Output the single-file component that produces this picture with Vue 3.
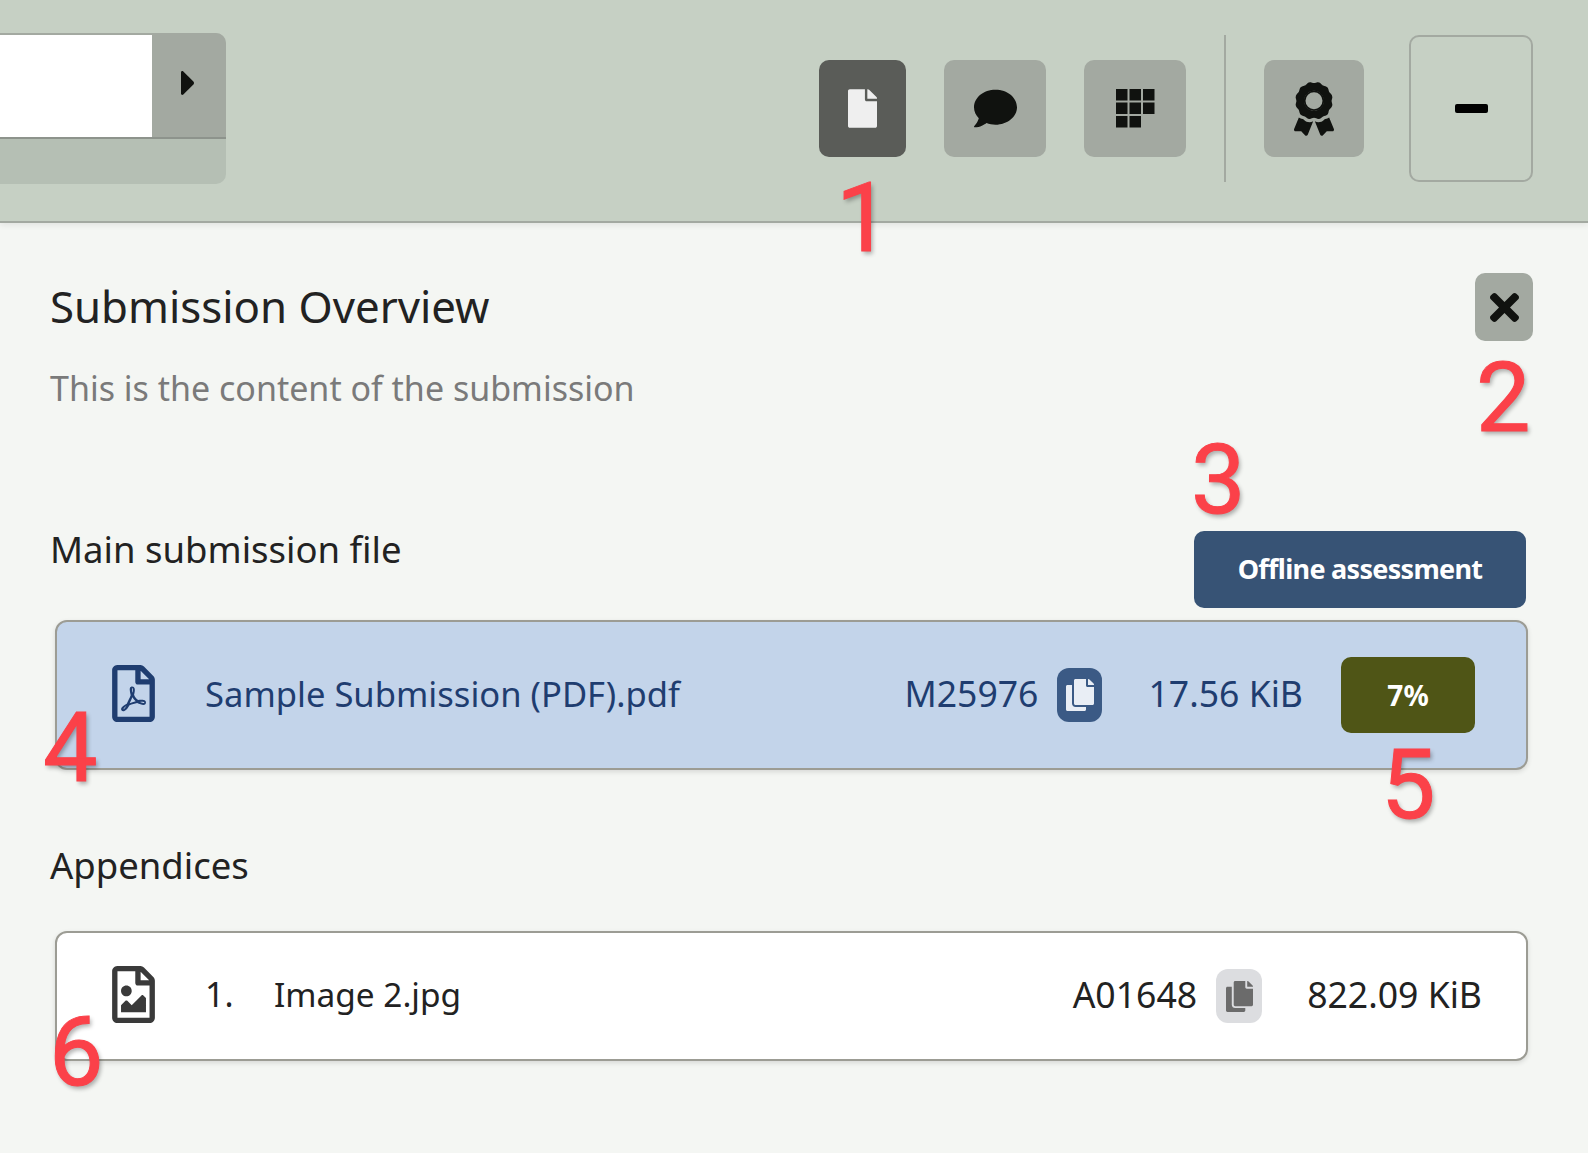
<template>
  <div class="page">
    <header class="topbar">
      <div class="search">
        <div class="search__row">
          <div class="search__input"></div>
          <button class="search__go" aria-label="Next">
            <svg width="13" height="24" viewBox="0 0 13 24"><path d="M0 1.5C0 .2 1.300-.4 2.300.5L12.400 10.500c.8.800.8 2.200 0 3L2.300 23.500C1.300 24.400 0 23.800 0 22.500z" fill="#10120f" /></svg>
          </button>
        </div>
      </div>
      <nav class="tools">
        <button class="tool tool--active tool--doc" aria-label="Submission">
          <svg width="29" height="39" viewBox="0 0 384 512"><path :d="icons.file" fill="#efefef" /></svg>
        </button>
        <button class="tool" aria-label="Comments">
          <svg width="43" height="43" viewBox="0 0 512 512"><path :d="icons.comment" fill="#10120f" /></svg>
        </button>
        <button class="tool" aria-label="Overview">
          <svg class="tool__grid" width="39" height="39" viewBox="0 0 39 39" fill="#10120f">
            <rect v-for="c in gridCells" :key="c.x + '-' + c.y" :x="c.x" :y="c.y" width="11.500" height="11.500" />
          </svg>
        </button>
        <span class="tools__divider"></span>
        <button class="tool tool--award" aria-label="Grade">
          <svg width="40" height="54" viewBox="0 0 384 512">
            <path :d="icons.award" fill="#10120f" />
            <circle cx="192" cy="176" r="90" fill="none" stroke="#10120f" stroke-width="17" />
          </svg>
        </button>
        <button class="tool-box" aria-label="Collapse"><span class="tool-box__bar"></span></button>
      </nav>
    </header>

    <main class="content">
      <div class="title-row">
        <h1 class="title">Submission Overview</h1>
        <button class="close" aria-label="Close">
          <svg width="29" height="29" viewBox="0 80 352 352"><path :d="icons.times" fill="#10120f" /></svg>
        </button>
      </div>
      <p class="subtitle">This is the content of the submission</p>

      <div class="main-head">
        <h2 class="heading">Main submission file</h2>
        <button class="offline">Offline assessment</button>
      </div>
      <div class="file file--main">
        <svg class="file__icon" width="43" height="57" viewBox="0 0 384 512"><path :d="icons.filePdf" fill="#1f3d70" /></svg>
        <span class="file__name">Sample Submission (PDF).pdf</span>
        <span class="file__id">M25976</span>
        <button class="copy copy--blue" aria-label="Copy">
          <svg width="28" height="32" viewBox="0 0 448 512"><path :d="icons.copy" fill="#e9eef5" /></svg>
        </button>
        <span class="file__size">17.56 KiB</span>
        <span class="badge">7%</span>
      </div>

      <h2 class="heading heading--appendix">Appendices</h2>
      <div class="file file--appendix">
        <svg class="file__icon" width="43" height="57" viewBox="0 0 384 512"><path :d="icons.fileImage" fill="#3a3a3a" /></svg>
        <span class="file__num">1.</span>
        <span class="file__name">Image 2.jpg</span>
        <span class="file__id">A01648</span>
        <button class="copy copy--grey" aria-label="Copy">
          <svg width="27" height="31" viewBox="0 0 448 512"><path :d="icons.copy" fill="#6b6b6b" /></svg>
        </button>
        <span class="file__size">822.09 KiB</span>
      </div>
    </main>

    <span v-for="n in 6" :key="n" class="mark" :class="`mark--${n}`">{{ n }}</span>
  </div>
</template>

<script setup>
const icons = {
  file: 'M224 136V0H24C10.7 0 0 10.7 0 24v464c0 13.3 10.7 24 24 24h336c13.3 0 24-10.7 24-24V160H248c-13.2 0-24-10.8-24-24zm160-14.1v6.1H256V0h6.1c6.4 0 12.5 2.5 17 7l97.9 98c4.5 4.5 7 10.6 7 16.9z',
  comment: 'M256 32C114.6 32 0 125.1 0 240c0 49.6 21.4 95 57 130.7C44.5 421.1 2.7 466 2.2 466.5c-2.2 2.3-2.8 5.7-1.5 8.7S4.8 480 8 480c66.3 0 116-31.8 140.6-51.4 32.7 12.3 69 19.4 107.4 19.4 141.4 0 256-93.1 256-208S397.4 32 256 32z',
  award: 'M97.12 362.63c-8.69-8.69-4.16-6.24-25.12-11.85-9.51-2.55-17.87-7.45-25.43-13.32L1.2 448.7c-4.39 10.77 3.81 22.47 15.43 22.03l52.69-2.01L105.56 507c8 8.44 22.04 5.81 26.43-4.96l52.05-127.62c-10.84 6.04-22.87 9.58-35.31 9.58-19.5 0-37.82-7.59-51.61-21.37zM382.8 448.7l-45.37-111.24c-7.56 5.88-15.92 10.77-25.43 13.32-21.07 5.64-16.45 3.18-25.12 11.85-13.79 13.78-32.12 21.37-51.62 21.37-12.44 0-24.47-3.55-35.31-9.58L252 502.04c4.39 10.77 18.44 13.4 26.43 4.96l36.25-38.28 52.69 2.01c11.62.44 19.82-11.27 15.43-22.03zM263 340c15.28-15.55 17.03-14.21 38.79-20.14 13.89-3.79 24.75-14.84 28.47-28.98 7.48-28.4 5.54-24.97 25.95-45.75 10.17-10.35 14.14-25.44 10.42-39.58-7.47-28.38-7.48-24.42 0-52.83 3.72-14.14-.25-29.23-10.42-39.58-20.41-20.78-18.47-17.36-25.95-45.75-3.72-14.14-14.58-25.19-28.47-28.98-27.88-7.61-24.52-5.62-44.95-26.41-10.17-10.35-25-14.4-38.89-10.61-27.87 7.6-23.98 7.61-51.9 0-13.89-3.79-28.72.25-38.89 10.61-20.41 20.78-17.05 18.8-44.94 26.41-13.89 3.79-24.75 14.84-28.47 28.98-7.47 28.39-5.54 24.97-25.95 45.75-10.17 10.35-14.15 25.44-10.42 39.58 7.47 28.36 7.48 24.4 0 52.82-3.72 14.14.25 29.23 10.42 39.59 20.41 20.78 18.47 17.35 25.95 45.75 3.72 14.14 14.58 25.19 28.47 28.98C104.6 325.96 106.27 325 121 340c13.23 13.47 33.84 15.88 49.74 5.82a39.676 39.676 0 0 1 42.53 0c15.89 10.06 36.5 7.65 49.73-5.82zM97.66 175.96c0-53.03 42.24-96.02 94.34-96.02s94.34 42.99 94.34 96.02-42.24 96.02-94.34 96.02-94.34-42.99-94.34-96.02z',
  times: 'M242.72 256l100.07-100.07c12.28-12.28 12.28-32.19 0-44.48l-22.24-22.24c-12.28-12.28-32.19-12.28-44.48 0L176 189.28 75.93 89.21c-12.28-12.28-32.19-12.28-44.48 0L9.21 111.45c-12.28 12.28-12.28 32.19 0 44.48L109.28 256 9.21 356.07c-12.28 12.28-12.28 32.19 0 44.48l22.24 22.24c12.28 12.28 32.2 12.28 44.48 0L176 322.72l100.07 100.07c12.28 12.28 32.2 12.28 44.48 0l22.24-22.24c12.28-12.28 12.28-32.19 0-44.48L242.72 256z',
  copy: 'M320 448v40c0 13.255-10.745 24-24 24H24c-13.255 0-24-10.745-24-24V120c0-13.255 10.745-24 24-24h72v296c0 30.879 25.121 56 56 56h168zm0-344V0H152c-13.255 0-24 10.745-24 24v368c0 13.255 10.745 24 24 24h272c13.255 0 24-10.745 24-24V128H344c-13.2 0-24-10.8-24-24zm120.971-31.029L375.029 7.029A24 24 0 0 0 358.059 0H352v96h96v-6.059a24 24 0 0 0-7.029-16.97z',
  filePdf: 'M369.9 97.9L286 14C277 5 264.8-.1 252.1-.1H48C21.5 0 0 21.5 0 48v416c0 26.5 21.5 48 48 48h288c26.5 0 48-21.5 48-48V131.9c0-12.7-5.1-25-14.1-34zM332.1 128H256V51.9l76.1 76.1zM48 464V48h160v104c0 13.3 10.7 24 24 24h104v288H48zm250.2-143.7c-12.2-12-47-8.7-64.4-6.5-17.2-10.5-28.7-25-36.8-46.3 3.9-16.1 10.1-40.6 5.4-56-4.2-26.2-37.8-23.6-42.6-5.9-4.4 16.1-.4 38.5 7 67.1-10 23.9-24.9 56-35.4 74.4-20 10.3-47 26.2-51 46.2-3.3 15.8 26 55.2 76.1-31.2 22.4-7.4 46.8-16.5 68.4-20.1 18.9 10.2 41 17 55.8 17 25.5 0 28-28.2 17.5-38.7zm-198.1 77.8c5.1-13.7 24.5-29.5 30.4-35-19 30.3-30.4 35.7-30.4 35zm81.6-190.6c7.4 0 6.7 32.1 1.8 40.8-4.4-13.9-4.3-40.8-1.8-40.8zm-24.4 136.6c9.7-16.9 18-37 24.7-54.7 8.3 15.1 18.9 27.2 30.1 35.5-20.8 4.3-38.9 13.1-54.8 19.2zm131.6-5s-5 6-37.3-7.8c35.1-2.6 40.9 5.4 37.3 7.8z',
  fileImage: 'M369.9 97.9L286 14C277 5 264.8-.1 252.1-.1H48C21.5 0 0 21.5 0 48v416c0 26.5 21.5 48 48 48h288c26.5 0 48-21.5 48-48V131.9c0-12.7-5.1-25-14.1-34zM332.1 128H256V51.9l76.1 76.1zM48 464V48h160v104c0 13.3 10.7 24 24 24h104v288H48zm32-48h224V288l-23.5-23.5c-4.7-4.7-12.3-4.7-17 0L176 352l-39.5-39.500c-4.7-4.7-12.3-4.7-17 0L80 352v64zm48-240c-26.5 0-48 21.5-48 48s21.5 48 48 48 48-21.5 48-48-21.5-48-48-48z',
}

// 3x3 raster, last cell stays empty
const gridCells = [0, 1, 2, 3, 4, 5, 6, 7].map((i) => ({
  x: (i % 3) * 13.5,
  y: Math.floor(i / 3) * 13.5,
}))
</script>

<style scoped>
.page {
  position: relative;
  min-height: 1153px;
  overflow: hidden;
  background: #f4f6f3;
  color: #222;
  font-family: "Noto Sans", "Open Sans", sans-serif;
}

button {
  display: flex;
  align-items: center;
  justify-content: center;
  padding: 0;
  border: 0;
  font-family: inherit;
}

.topbar {
  display: flex;
  align-items: flex-start;
  height: 221px;
  background: #c6d0c4;
  border-bottom: 2px solid #a3a9a1;
  box-shadow: 0 2px 6px rgba(0, 0, 0, 0.08);
}

.search {
  width: 226px;
  height: 151px;
  margin-top: 33px;
  overflow: hidden;
  background: #b5bfb4;
  border-radius: 0 10px 10px 0;
}

.search__row {
  display: flex;
  height: 104px;
  background: #a3a9a1;
  border-bottom: 2px solid #8d938c;
}

.search__input {
  flex: 1;
  margin-top: 2px;
  background: #fff;
}

.search__go {
  width: 74px;
  padding-bottom: 5px;
  padding-right: 4px;
  background: transparent;
}

.tools {
  display: flex;
  align-items: center;
  height: 147px;
  margin-top: 35px;
  margin-left: 593px;
  gap: 38px;
}

.tool {
  width: 102px;
  height: 97px;
  background: #a3a9a1;
  border-radius: 10px;
}

.tool__grid {
  margin-left: 1px;
}

.tool--doc { width: 87px; }
.tool--active { background: #5a5c58; }
.tool--award { width: 100px; }

.tools__divider {
  width: 2px;
  height: 147px;
  background: #a3a9a1;
}

.tool-box {
  width: 124px;
  height: 147px;
  margin-left: 7px;
  background: transparent;
  border: 2px solid #a3a9a1;
  border-radius: 10px;
}

.tool-box__bar {
  width: 33px;
  height: 9px;
  background: #000;
  border-radius: 2px;
}

.content {
  padding: 0 62px 0 50px;
}

.title-row {
  display: flex;
  align-items: center;
  justify-content: space-between;
  margin-top: 50px;
}

.title {
  margin: 0 0 2px;
  font-size: 43.800px;
  font-weight: 400;
  line-height: 66px;
}

.close {
  width: 58px;
  height: 68px;
  margin-right: -7px;
  background: #a3a9a1;
  border-radius: 10px;
}

.subtitle {
  margin: 26px 0 0;
  font-size: 34px;
  line-height: 42px;
  color: #7a7a7a;
}

.main-head {
  display: flex;
  justify-content: space-between;
  margin-top: 122px;
}

.heading {
  margin: 0;
  font-size: 36.500px;
  font-weight: 400;
  line-height: 36px;
}

.offline {
  width: 332px;
  height: 77px;
  padding-bottom: 2px;
  background: #375375;
  color: #fff;
  font-size: 27px;
  font-weight: 700;
  letter-spacing: -0.7px;
  border-radius: 10px;
}

.file {
  display: flex;
  align-items: center;
  box-sizing: border-box;
  margin-left: 5px;
  margin-right: -2px;
  border: 2px solid #9c9c94;
  border-radius: 12px;
  box-shadow: 0 2px 5px rgba(0, 0, 0, 0.12);
  font-size: 35.600px;
}

.file--main {
  height: 150px;
  margin-top: 12px;
  padding: 0 51px 0 55px;
  background: #c3d4ea;
  color: #1f3d70;
}

.file--appendix {
  height: 130px;
  margin-top: 47px;
  padding: 0 44px 0 55px;
  background: #fff;
}

.file__icon {
  flex: none;
  margin-right: 50px;
  margin-bottom: 3px;
}

.file__num,
.file__name,
.file__id,
.file__size {
  margin-bottom: 4px;
}

.file__num {
  width: 69px;
  font-size: 34px;
}

.file__name {
  font-size: 34.600px;
}

.file--appendix .file__name {
  font-size: 33.400px;
}

.file__id {
  margin-left: auto;
  margin-right: 19px;
}

.copy {
  width: 45px;
  height: 54px;
  border-radius: 12px;
}

.copy--blue {
  margin-right: 46px;
  background: #3b5a85;
}

.copy--grey {
  width: 46px;
  margin-right: 45px;
  background: #dcdde0;
}

.badge {
  display: flex;
  align-items: center;
  justify-content: center;
  width: 134px;
  height: 76px;
  margin-left: 38px;
  background: #4f5516;
  color: #fff;
  font-size: 28px;
  font-weight: 700;
  border-radius: 10px;
}

.heading--appendix {
  margin-top: 77px;
  margin-bottom: 48px;
}

.heading--appendix + .file {
  margin-top: 0;
}

/* red callout numbers drawn over the screenshot */
.mark {
  position: absolute;
  font-family: Roboto, "Liberation Sans", sans-serif;
  font-size: 97px;
  font-weight: 400;
  line-height: 1;
  color: #fb4149;
  -webkit-text-stroke: 1px #fb4149;
  text-shadow: 2px 3px 4px rgba(0, 0, 0, 0.3);
}

.mark--1 { left: 836px; top: 170px; }
.mark--2 { left: 1476px; top: 350px; }
.mark--3 { left: 1191px; top: 432px; }
.mark--4 { left: 43px; top: 700px; }
.mark--5 { left: 1381px; top: 737px; }
.mark--6 { left: 49px; top: 1004px; }
</style>

<style>
body {
  background: #f4f6f3;
}
</style>
